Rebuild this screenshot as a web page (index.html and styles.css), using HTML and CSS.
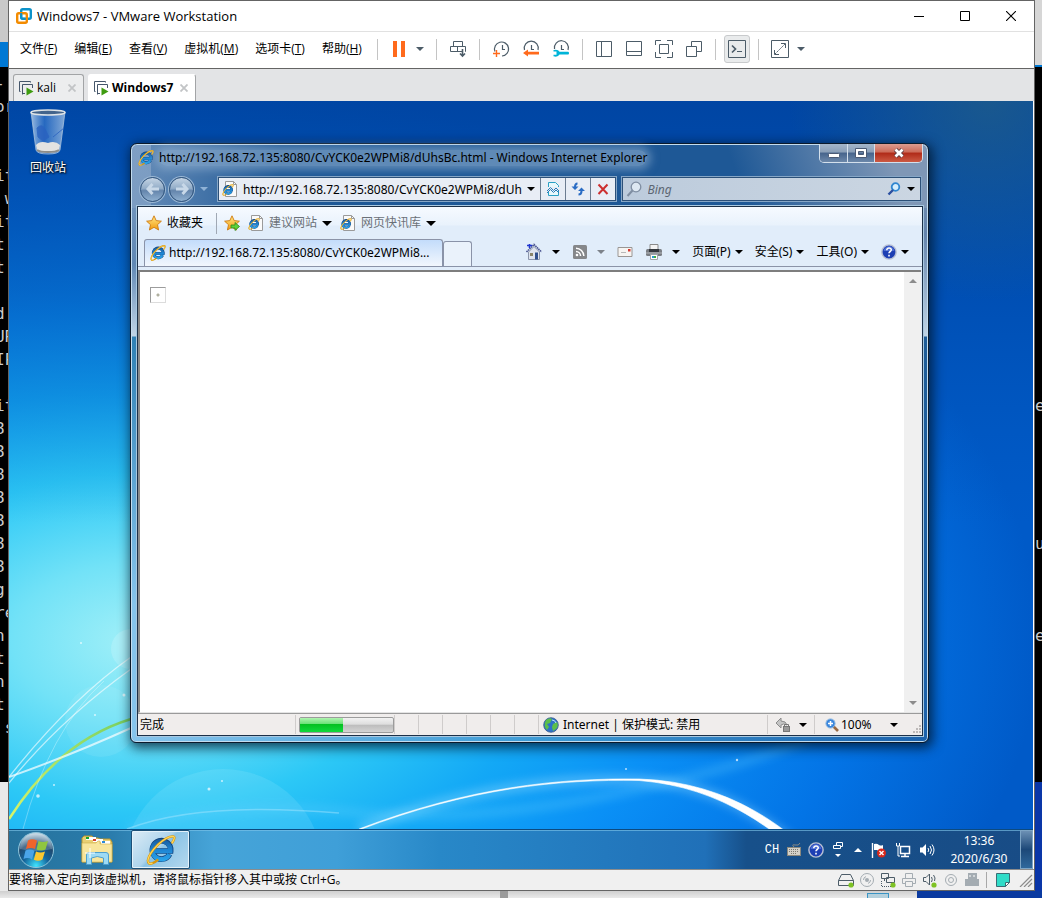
FILE: index.html
```html
<!DOCTYPE html>
<html lang="zh-cn">

<head>
    <meta charset="UTF-8">
    <meta name="viewport" content="width=device-width, initial-scale=1.0">
    <title>Windows7 - VMware Workstation</title>
    <link rel="stylesheet" href="styles.css">
</head>

<body>
    <!-- 公用图标 -->
    <svg class="defs" width="0" height="0">
        <defs>
            <linearGradient id="ieBlue" gradientUnits="userSpaceOnUse" x1="0" y1="4" x2="0" y2="29">
                <stop offset="0" stop-color="#17599c" />
                <stop offset=".5" stop-color="#1f86d4" />
                <stop offset="1" stop-color="#2aa8ee" />
            </linearGradient>
            <linearGradient id="gold" x1="0" y1="0" x2="0" y2="1">
                <stop offset="0" stop-color="#ffe98a" />
                <stop offset="1" stop-color="#f29a0c" />
            </linearGradient>
            <symbol id="ie" viewBox="0 0 32 32">
                <path d="M25.200 20.500A9.800 9.800 0 1 1 26.300 17H9" fill="none" stroke="#0f3f78" stroke-width="6" />
                <path d="M25 20.500A9.700 9.700 0 1 1 26 17H9" fill="none" stroke="url(#ieBlue)" stroke-width="4.800" />
                <path d="M27.500 9Q32 2 29 1.500Q23 1 13 10Q3 20 2 27Q2 32 7 30Q10 29 13 26" fill="none" stroke="#d8980e" stroke-width="2.600" />
                <path d="M27.500 9Q32 2 29 1.500Q23 1 13 10Q3 20 2 27Q2 32 7 30" fill="none" stroke="#ffd65a" stroke-width="1.300" />
            </symbol>
            <symbol id="page" viewBox="0 0 16 16">
                <path d="M3.500 .5H11.500L14.500 3.500V15.500H3.500Z" fill="#fafafa" stroke="#9a9a9a" />
                <path d="M11.500 .5V3.500H14.500" fill="none" stroke="#9a9a9a" />
                <use href="#ie" x="0" y="3" width="12" height="12" />
            </symbol>
            <symbol id="caret" viewBox="0 0 8 4">
                <path d="M0 0H8L4 4Z" fill="currentColor" />
            </symbol>
            <symbol id="clockface" viewBox="0 0 20 20">
                <path d="M4 12.500A7 7 0 1 1 11 17" fill="none" stroke="#4c5c68" stroke-width="1.200" />
                <path d="M11.500 6V10.500H14" fill="none" stroke="#4c5c68" stroke-width="1.200" />
            </symbol>
            <symbol id="vm" viewBox="0 0 16 16">
                <path d="M2.500 11.500H1.500V1.500H12.500V2.500M4.500 14.500V4.500H14.500V8M4 13.500H7" fill="none" stroke="#45566b" />
                <path d="M8.500 7.500L15.500 11.500L8.500 15.500Z" fill="#3f9c10" />
            </symbol>
            <symbol id="star" viewBox="0 0 16 16">
                <path d="M8 .8L10.200 5.600L15.400 6.200L11.500 9.700L12.600 15L8 12.300L3.400 15L4.500 9.700L.6 6.200L5.800 5.600Z" fill="url(#gold)" stroke="#cf7a10" stroke-width=".9" />
            </symbol>
            <symbol id="help" viewBox="0 0 18 18">
                <circle cx="9" cy="9" r="8" fill="#1d3fb4" stroke="#b8c0d4" stroke-width="1.600" />
                <path d="M3 8A6 5.500 0 0 1 15 8Z" fill="#6a8ae6" opacity=".6" />
                <path d="M6.500 7C6.500 3.500 11.800 3.800 11.500 6.800C11.300 8.500 9 8.500 9 10.500M9 12V14" fill="none" stroke="#fff" stroke-width="1.800" />
            </symbol>
            <symbol id="x" viewBox="0 0 8 8">
                <path d="M.5 .5L7.500 7.500M7.500 .5L.5 7.500" stroke="currentColor" stroke-width="1.800" />
            </symbol>
        </defs>
    </svg>

    <div class="screen">
        <!-- 后面的终端窗口 -->
        <div class="behind behind_left">
            <div class="behind_head"></div>
            <div class="behind_tab"></div>
            <pre class="terminal">-
or


it
 w
it
t
t

d
UR
IP
 :
it
8
8
8
8
8
8
8
g
re
n
t
n
t
 s</pre>
        </div>

        <main class="vmware">
            <header class="titlebar">
                <svg class="logo" viewBox="0 0 16 16">
                    <rect x="5.200" y="1.200" width="9.600" height="9.600" rx="1.500" fill="none" stroke="#0d92c9" stroke-width="2.400" />
                    <rect x="1.200" y="5.200" width="9.600" height="9.600" rx="1.500" fill="none" stroke="#f38b00" stroke-width="2.400" />
                    <path d="M5.200 5V9.500Q5.200 10.800 6.500 10.800H9.500" fill="none" stroke="#0d92c9" stroke-width="2" />
                </svg>
                <h1 class="title">Windows7 - VMware Workstation</h1>
                <div class="caption">
                    <button aria-label="最小化"><svg viewBox="0 0 10 10"><path d="M0 5.500H10" stroke="#000" /></svg></button>
                    <button aria-label="最大化"><svg viewBox="0 0 10 10"><path d="M.5 .5H9.500V9.500H.5Z" fill="none" stroke="#000" /></svg></button>
                    <button aria-label="关闭"><svg viewBox="0 0 10 10"><path d="M0 0L10 10M10 0L0 10" stroke="#000" stroke-width="1.100" /></svg></button>
                </div>
            </header>

            <div class="menubar">
                <nav class="menus">
                    <button>文件(<u>F</u>)</button>
                    <button>编辑(<u>E</u>)</button>
                    <button>查看(<u>V</u>)</button>
                    <button>虚拟机(<u>M</u>)</button>
                    <button>选项卡(<u>T</u>)</button>
                    <button>帮助(<u>H</u>)</button>
                </nav>
                <div class="tools">
                    <span class="sep"></span>
                    <button aria-label="挂起"><svg viewBox="0 0 20 20"><path d="M4 2H8V18H4ZM12 2H16V18H12Z" fill="#ff6a1c" /></svg></button>
                    <button class="drop power" aria-label="电源选项"><svg class="caret"><use href="#caret" /></svg></button>
                    <span class="sep"></span>
                    <button aria-label="发送 Ctrl+Alt+Del"><svg viewBox="0 0 20 20"><path d="M5.500 7.500V2.500H14.500V7.500M14 12.500H2.500V7.500H17.500V12.500H17M9.500 7.500V12.500" fill="none" stroke="#4c5c68" /><path d="M14.500 10V17M12 14.500L14.500 17L17 14.500" fill="none" stroke="#4c5c68" stroke-width="1.600" /></svg></button>
                    <span class="sep"></span>
                    <button aria-label="拍摄快照"><svg viewBox="0 0 20 20"><use href="#clockface" /><path d="M2 14.500H9M5.500 11V18" stroke="#ff6a1c" stroke-width="1.400" /></svg></button>
                    <button aria-label="恢复快照"><svg viewBox="0 0 20 20"><path d="M3.500 11A7 7 0 1 1 17 11M10.500 6V10.500H13" fill="none" stroke="#4c5c68" stroke-width="1.200" /><path d="M2 14L7 10.500V12.800H18V15.500H7V17.500Z" fill="#ff6a1c" /></svg></button>
                    <button aria-label="管理快照"><svg viewBox="0 0 20 20"><path d="M3.500 10A7 7 0 1 1 17 11M10.500 6V10.500H13" fill="none" stroke="#4c5c68" stroke-width="1.200" /><path d="M2.500 11Q7 9.800 8.500 12.800H17Q18 12.800 18 14.200Q18 15.500 17 15.500H8.500Q7 18.500 2.500 17.300V15.700H5.500V12.600H2.500Z" fill="#00b4d8" /></svg></button>
                    <span class="sep"></span>
                    <button aria-label="显示库"><svg viewBox="0 0 20 20"><path d="M2.500 2.500H17.500V17.500H2.500ZM7.500 2.500V17.500" fill="none" stroke="#4c5c68" /></svg></button>
                    <button aria-label="显示缩略图"><svg viewBox="0 0 20 20"><path d="M2.500 2.500H17.500V16.500H2.500ZM2.500 12.500H17.500" fill="none" stroke="#4c5c68" /></svg></button>
                    <button aria-label="全屏"><svg viewBox="0 0 20 20"><path d="M1.500 6V1.500H7M13 1.500H18.500V6M18.500 13V18.500H13M7 18.500H1.500V13M5.500 5.500H14.500V14.500H5.500Z" fill="none" stroke="#4c5c68" /></svg></button>
                    <button aria-label="Unity"><svg viewBox="0 0 20 20"><path d="M2.500 7.500H12.500V17.500H2.500ZM7.500 7.500V2.500H17.500V12.500H12.500" fill="none" stroke="#4c5c68" /></svg></button>
                    <span class="sep"></span>
                    <button class="pressed" aria-label="控制台视图"><svg viewBox="0 0 20 20"><path d="M1.500 1.500H18.500V18.500H1.500Z" fill="none" stroke="#4c5c68" /><path d="M5 6.500L8.500 10L5 13.500" fill="none" stroke="#4c5c68" stroke-width="1.700" /><path d="M10 12.500H15" stroke="#4c5c68" /></svg></button>
                    <span class="sep"></span>
                    <button aria-label="拉伸客户机"><svg viewBox="0 0 20 20"><path d="M1.500 1.500H18.500V18.500H1.500ZM11 4.500H15.500V9M4.500 11V15.500H9" fill="none" stroke="#4c5c68" /><path d="M5 15L15 5" stroke="#4c5c68" stroke-dasharray="2 1" /></svg></button>
                    <button class="drop" aria-label="拉伸选项"><svg class="caret"><use href="#caret" /></svg></button>
                </div>
            </div>

            <div class="tabs">
                <div class="tab">
                    <svg class="i16"><use href="#vm" /></svg>
                    <span>kali</span>
                    <button class="tab_close" aria-label="关闭 kali"><svg><use href="#x" /></svg></button>
                </div>
                <div class="tab active">
                    <svg class="i16"><use href="#vm" /></svg>
                    <span>Windows7</span>
                    <button class="tab_close" aria-label="关闭 Windows7"><svg><use href="#x" /></svg></button>
                </div>
            </div>

            <section class="guest">
                <svg class="wallpaper" viewBox="0 0 1024 768" preserveAspectRatio="none">
                    <defs>
                        <radialGradient id="sky" gradientUnits="userSpaceOnUse" cx="0" cy="0" r="1" gradientTransform="translate(130 540) scale(900 560)">
                            <stop offset="0" stop-color="#a2f0f8" />
                            <stop offset=".14" stop-color="#72e2f7" />
                            <stop offset=".3" stop-color="#2cc8f6" />
                            <stop offset=".45" stop-color="#13a8f6" />
                            <stop offset=".6" stop-color="#0a90f6" />
                            <stop offset=".8" stop-color="#0374e6" />
                            <stop offset="1" stop-color="#005ac8" />
                        </radialGradient>
                        <linearGradient id="night" x1="0" y1="0" x2="0" y2="1">
                            <stop offset="0" stop-color="#00409a" stop-opacity=".8" />
                            <stop offset=".25" stop-color="#0044a0" stop-opacity=".5" />
                            <stop offset=".55" stop-color="#0050b0" stop-opacity="0" />
                        </linearGradient>
                        <radialGradient id="corner" gradientUnits="userSpaceOnUse" cx="980" cy="0" r="200">
                            <stop offset="0" stop-color="#2a6480" stop-opacity=".6" />
                            <stop offset="1" stop-color="#2a6480" stop-opacity="0" />
                        </radialGradient>
                        <linearGradient id="leaf" x1="0" y1="1" x2="1" y2="0">
                            <stop offset="0" stop-color="#d8f46a" />
                            <stop offset="1" stop-color="#78cf60" />
                        </linearGradient>
                        <filter id="soft" x="-10%" y="-30%" width="120%" height="160%"><feGaussianBlur stdDeviation="5" /></filter>
                        <filter id="edge" x="-10%" y="-10%" width="120%" height="120%"><feGaussianBlur stdDeviation=".7" /></filter>
                    </defs>
                    <rect width="1024" height="768" fill="url(#sky)" />
                    <rect width="1024" height="768" fill="url(#night)" />
                    <rect width="1024" height="768" fill="url(#corner)" />
                    <circle cx="214" cy="768" r="100" fill="#c8f6ff" opacity=".13" />
                    <circle cx="92" cy="620" r="36" fill="#fff" opacity=".08" />
                    <circle cx="122" cy="548" r="20" fill="#fff" opacity=".16" />
                    <path d="M118 728Q200 700 330 710Q460 725 620 690Q740 665 800 636" fill="none" stroke="#6ad4ff" stroke-width="8" opacity=".3" filter="url(#soft)" />
                    <path d="M118 728Q190 700 330 712" fill="none" stroke="#b8ecff" stroke-width="1.500" opacity=".4" />
                    <path d="M350 728C460 686 560 676 630 679C720 684 770 728 814 768" fill="none" stroke="#9fe0ff" stroke-width="10" opacity=".4" filter="url(#soft)" />
                    <path d="M350 728C460 686 550 677 630 678C725 681 780 730 820 768H807C770 732 715 686 630 679.500C550 678 460 687 350 729Z" fill="#fff" stroke="#fff" stroke-width=".6" filter="url(#edge)" />
                    <path d="M0 718Q50 640 122 618" fill="none" stroke="url(#leaf)" stroke-width="2.500" />
                    <path d="M0 676Q60 655 122 627" fill="none" stroke="#fff" stroke-width="2" opacity=".7" />
                    <path d="M0 682Q50 620 122 568M0 676Q60 600 122 556" fill="none" stroke="#fff" stroke-width="1.300" opacity=".6" />
                    <path d="M14 728Q40 630 95 580" fill="none" stroke="#fff" opacity=".3" />
                    <g fill="#fff" opacity=".7">
                        <circle cx="115" cy="594" r="1.500" /><circle cx="86" cy="614" r="1" /><circle cx="29" cy="695" r="1.800" />
                        <circle cx="45" cy="684" r="1" /><circle cx="200" cy="688" r="1.500" /><circle cx="213" cy="680" r="1" />
                        <circle cx="617" cy="668" r="1" /><circle cx="728" cy="659" r="1.200" /><circle cx="72" cy="542" r="1" />
                    </g>
                </svg>

                <div class="desktop">
                    <a class="shortcut" href="#recycle">
                        <svg viewBox="0 0 40 46">
                            <defs>
                                <linearGradient id="bin" x1="0" y1="0" x2="1" y2="0">
                                    <stop offset="0" stop-color="#cfe2f4" stop-opacity=".75" />
                                    <stop offset=".4" stop-color="#3f7ed0" stop-opacity=".6" />
                                    <stop offset="1" stop-color="#d8e8f6" stop-opacity=".6" />
                                </linearGradient>
                            </defs>
                            <path d="M3 3L8 41Q9 45 20 45Q31 45 32 41L37 3Z" fill="url(#bin)" stroke="#a9c3dd" stroke-width=".8" />
                            <path d="M8 36Q12 31 20 34Q27 31 32 36L31 41Q30 44 20 44Q10 44 9 41Z" fill="#e3e3e1" />
                            <path d="M9 19Q14 14 17 20L21 28L15 32L10 28ZM25 28L36 19" fill="#2a62c0" stroke="#2a62c0" opacity=".8" />
                            <ellipse cx="20" cy="3.500" rx="17" ry="2.500" fill="#43648c" stroke="#dfe3e6" stroke-width="1.600" />
                            <path d="M9 41Q12 43 20 43Q28 43 31 41" fill="none" stroke="#8d8d8a" stroke-width="2" />
                        </svg>
                        <span>回收站</span>
                    </a>

                    <article class="ie">
                        <header class="ie_title">
                            <svg class="i16"><use href="#ie" /></svg>
                            <h2>http://192.168.72.135:8080/CvYCK0e2WPMi8/dUhsBc.html - Windows Internet Explorer</h2>
                            <div class="ie_caption">
                                <button class="min" aria-label="最小化"><svg viewBox="0 0 14 12"><rect x="1.500" y="6.500" width="11" height="4" rx="1" fill="#fff" stroke="#4a5a74" /></svg></button>
                                <button class="max" aria-label="最大化"><svg viewBox="0 0 14 12"><path d="M1.500 1.500H12.500V10.500H1.500ZM4.500 4.500V7.500H9.500V4.500Z" fill="#fff" stroke="#4a5a74" fill-rule="evenodd" /></svg></button>
                                <button class="close" aria-label="关闭"><svg viewBox="0 0 14 12"><path d="M3.500 2.500L10.500 9.500M10.500 2.500L3.500 9.500" stroke="#5a3a40" stroke-width="4.500" /><path d="M3.500 2.500L10.500 9.500M10.500 2.500L3.500 9.500" stroke="#fff" stroke-width="2.800" /></svg></button>
                            </div>
                        </header>

                        <div class="ie_nav">
                            <div class="history">
                                <button class="round" aria-label="后退"><svg viewBox="0 0 16 16"><path d="M7.500 3L3 8L7.500 13M3.500 8H14" fill="none" stroke="#c8d8e8" stroke-width="3" /></svg></button>
                                <button class="round" aria-label="前进"><svg viewBox="0 0 16 16"><path d="M8.500 3L13 8L8.500 13M12.500 8H2" fill="none" stroke="#c8d8e8" stroke-width="3" /></svg></button>
                                <button class="recent" aria-label="最近浏览的网页"><svg class="caret"><use href="#caret" /></svg></button>
                            </div>
                            <div class="field address">
                                <svg class="i16"><use href="#page" /></svg>
                                <input type="text" aria-label="地址" value="http://192.168.72.135:8080/CvYCK0e2WPMi8/dUhsBc.html">
                                <button class="field_drop" aria-label="显示地址列表"><svg class="caret"><use href="#caret" /></svg></button>
                                <button class="field_btn" aria-label="兼容性视图"><svg viewBox="0 0 16 16"><path d="M3.500 6V1.500H10.500L13.500 4.500V6M3.500 10V14.500H13.500V10" fill="#e8f8fc" stroke="#2aa0c4" /><path d="M2 10L5.500 6.500L8.500 9.500L11 7L14 10M2 12L5.500 8.500L8.500 11.500L11 9L14 12" fill="none" stroke="#2a7cb8" /></svg></button>
                                <button class="field_btn" aria-label="刷新"><svg viewBox="0 0 16 16"><path d="M7.500 2.500Q5 2.500 5 6M8.500 13.500Q11.500 13.500 11.500 10" fill="none" stroke="#2a6cc4" stroke-width="2" /><path d="M1.500 5.500H8.500L5 9ZM8 10H15L11.500 6.500Z" fill="#2a6cc4" /></svg></button>
                                <button class="field_btn" aria-label="停止"><svg viewBox="0 0 16 16"><path d="M3.500 3.500L12.500 13M12.500 3.500L3.500 13" stroke="#cc2f2f" stroke-width="2" /></svg></button>
                            </div>
                            <div class="field search">
                                <svg class="i16" viewBox="0 0 16 16"><circle cx="10" cy="6" r="4.800" fill="#dde8f2" stroke="#7f8ea2" stroke-width="1.300" /><path d="M6.500 9.500L1.500 15" stroke="#7f8ea2" stroke-width="2" /></svg>
                                <input type="text" aria-label="搜索" placeholder="Bing">
                                <button class="field_go" aria-label="搜索"><svg viewBox="0 0 16 16"><circle cx="9.500" cy="6" r="3.800" fill="#d6eefc" stroke="#2f86d0" stroke-width="1.800" /><path d="M7 9L2.500 13.500" stroke="#2a4fa0" stroke-width="2.400" /></svg></button>
                                <button class="field_drop" aria-label="搜索选项"><svg class="caret"><use href="#caret" /></svg></button>
                            </div>
                        </div>

                        <div class="ie_client">
                            <div class="favorites">
                                <button><svg class="i16"><use href="#star" /></svg>收藏夹</button>
                                <span class="fav_sep"></span>
                                <button aria-label="添加到收藏夹栏"><svg class="i16" viewBox="0 0 16 16"><use href="#star" /><path d="M7 10H11V7.500L15.500 11.500L11 15.500V13H7Z" fill="#5fd03a" stroke="#2d8a1a" stroke-width=".8" /></svg></button>
                                <button class="gray"><svg class="i16"><use href="#page" /></svg>建议网站<svg class="caret big"><use href="#caret" /></svg></button>
                                <button class="gray"><svg class="i16"><use href="#page" /></svg>网页快讯库<svg class="caret big"><use href="#caret" /></svg></button>
                            </div>
                            <div class="ie_tabs">
                                <button class="ie_tab"><svg class="i16"><use href="#ie" /></svg><span>http://192.168.72.135:8080/CvYCK0e2WPMi8...</span></button>
                                <button class="ie_newtab" aria-label="新选项卡"></button>
                                <div class="commands">
                                    <button class="wide" aria-label="主页"><svg class="i18" viewBox="0 0 18 18"><path d="M3.500 9V16.500H14.500V9L9 3.500Z" fill="#dfe4ee" stroke="#8d97ac" /><path d="M1.500 9L9 1.500L16.500 9" fill="none" stroke="#4a5490" stroke-width="1.600" stroke-dasharray="1.500 .6" /><path d="M4.500 1V5M2 2.500H7" stroke="#1f36d0" stroke-width="1.600" /><rect x="5" y="10" width="3" height="3" fill="#8a8468" /><rect x="10" y="9.500" width="3" height="7" fill="#31508c" /></svg><svg class="caret"><use href="#caret" /></svg></button>
                                    <button class="wide dim" aria-label="源"><svg class="i16" viewBox="0 0 16 16"><rect x="1" y="1" width="14" height="14" rx="1.500" fill="#85878a" /><path d="M4 7.500A4.500 4.500 0 0 1 8.500 12M4 4.200A8 8 0 0 1 11.800 12" fill="none" stroke="#fff" stroke-width="1.500" /><circle cx="5" cy="11" r="1.300" fill="#fff" /></svg><svg class="caret"><use href="#caret" /></svg></button>
                                    <button aria-label="阅读邮件"><svg class="i16" viewBox="0 0 16 16"><path d="M1 3.500H15V12.500H1Z" fill="#f6f4f2" stroke="#9a9694" /><rect x="11" y="5" width="2.500" height="2.500" fill="#d83a30" /><path d="M4 8.500H9" stroke="#b8b8b8" /></svg></button>
                                    <button class="wide" aria-label="打印"><svg class="i18" viewBox="0 0 18 18"><path d="M5 6V1.500H13V6" fill="#f4f4f4" stroke="#8a8a8a" /><rect x="1" y="6" width="16" height="7" rx="1.500" fill="#7a7e84" /><path d="M4 6H14V9H4Z" fill="#34383e" /><path d="M1 10H17" stroke="#b4b8bc" /><path d="M5.500 11.500H12.500V16.500H5.500Z" fill="#fff" stroke="#a0a4a8" /><rect x="7" y="13" width="2" height="2" fill="#2a9ad0" /><rect x="9" y="13" width="2" height="2" fill="#3fae40" /></svg><svg class="caret"><use href="#caret" /></svg></button>
                                    <button>页面(P)<svg class="caret"><use href="#caret" /></svg></button>
                                    <button>安全(S)<svg class="caret"><use href="#caret" /></svg></button>
                                    <button>工具(O)<svg class="caret"><use href="#caret" /></svg></button>
                                    <button aria-label="帮助"><svg class="i16"><use href="#help" /></svg><svg class="caret"><use href="#caret" /></svg></button>
                                </div>
                            </div>
                            <div class="page">
                                <div class="page_body">
                                    <div class="broken"></div>
                                </div>
                                <div class="scrollbar">
                                    <svg class="caret up"><use href="#caret" /></svg>
                                    <svg class="caret"><use href="#caret" /></svg>
                                </div>
                            </div>
                            <footer class="ie_status">
                                <span class="done">完成</span>
                                <div class="loading"><div class="bar"><div class="fill"></div></div></div>
                                <i></i><i></i><i></i><i></i><i></i><i></i>
                                <span class="zone">
                                    <svg class="i16" viewBox="0 0 16 16"><circle cx="8" cy="8" r="7.300" fill="#2d72c8" stroke="#37588c" stroke-width=".8" /><path d="M3 3Q7 0 9 2L7 6L4 7L6 10L4 13Q0 9 3 3ZM10 7L14 5Q16 9 13 12L10 14L9 10Z" fill="#5cc04a" /><path d="M9 3Q12 3 13 6" stroke="#bfe4ff" fill="none" /></svg>
                                    Internet | 保护模式: 禁用
                                </span>
                                <button class="privacy" aria-label="隐私"><svg class="i16" viewBox="0 0 16 16"><path d="M1 6L6 1V4Q11 4 12 8Q8 6 6 8V11Z" fill="#c4c4c4" stroke="#8c8c8c" /><rect x="8.500" y="9.500" width="6" height="5" fill="#999" stroke="#777" /><path d="M9.500 9.500V7.500H13.500V9.500" fill="none" stroke="#777" /></svg><svg class="caret"><use href="#caret" /></svg></button>
                                <button class="zoom"><svg class="i14" viewBox="0 0 14 14"><path d="M8.500 8.500L13 13" stroke="#9a6a42" stroke-width="2.600" /><circle cx="5.500" cy="5.500" r="4.600" fill="#3a86dc" stroke="#8fb8e0" /><path d="M3 5.500H8M5.500 3V8" stroke="#fff" stroke-width="1.500" /></svg><span>100%</span><svg class="caret"><use href="#caret" /></svg></button>
                                <svg class="grip" viewBox="0 0 8 8"><path d="M6 0h2v2h-2zM6 3h2v2h-2zM3 3h2v2h-2zM6 6h2v2h-2zM3 6h2v2h-2zM0 6h2v2h-2z" fill="#bdb9b8" /></svg>
                            </footer>
                        </div>
                    </article>
                </div>

                <div class="taskbar">
                    <button class="start" aria-label="开始">
                        <svg viewBox="0 0 38 38">
                            <defs>
                                <radialGradient id="orb" cx=".5" cy=".95" r=".9">
                                    <stop offset="0" stop-color="#3fe4ff" />
                                    <stop offset=".4" stop-color="#14659c" />
                                    <stop offset=".7" stop-color="#1f4a70" />
                                    <stop offset="1" stop-color="#b4ccdc" />
                                </radialGradient>
                            </defs>
                            <circle cx="19" cy="19" r="17.500" fill="url(#orb)" stroke="#8ec4da" />
                            <path d="M3 18A16 16 0 0 1 35 18Q19 22 3 18Z" fill="#fff" opacity=".2" />
                            <path d="M11 9.500Q15 7 20 9.500L18 18Q14 16 9 18Z" fill="#f0642c" />
                            <path d="M21.500 10Q26 12 31 10L28.500 18.500Q24 20.500 19.500 18.500Z" fill="#8fc640" />
                            <path d="M8.500 19.500Q13 17.500 17.500 19.800L15 28.500Q11 26 6.500 28Z" fill="#4aa4e8" />
                            <path d="M19 20.500Q23.500 22.500 28 20.500L25.500 28.500Q21.500 31 16.800 28.800Z" fill="#fcc830" />
                        </svg>
                    </button>
                    <button class="explorer" aria-label="Windows 资源管理器">
                        <svg viewBox="0 0 34 32">
                            <path d="M2 4L4 2H12L14 4H18L20 5H30L32 8V28H2Z" fill="#e9cf74" stroke="#b8952f" />
                            <path d="M6 3H16V6H6ZM13 5H23V8H13ZM21 7H30V10H21Z" fill="#fff" />
                            <path d="M6 3H9V5H6Z" fill="#15a32a" /><path d="M13 5H16V7H13Z" fill="#d8402c" /><path d="M22 7H25V9H22Z" fill="#2a8ad8" />
                            <path d="M2 9H16L18 7H20V10H32V28H2Z" fill="#f8e59c" stroke="#cfae4a" stroke-width=".6" />
                            <path d="M6.500 30.500V21Q6.500 18.500 9 18.500H26Q28.500 18.500 28.500 21V30.500H23.500V24Q17 21 11.500 24V30.500Z" fill="#9ddaf4" stroke="#4d9fce" />
                            <path d="M10 14V24M5 19H15" stroke="#fff" />
                        </svg>
                    </button>
                    <button class="running" aria-label="Internet Explorer"><svg><use href="#ie" /></svg></button>
                    <div class="tray">
                        <span class="slot lang">CH</span>
                        <span class="slot"><svg viewBox="0 0 16 16"><path d="M8 5Q5 2 9 3Q13 4 14 1" fill="none" stroke="#8a8a84" /><rect x="1.500" y="5.500" width="13" height="8" fill="#d4d1c8" stroke="#8a887e" /><path d="M3 7.500H13M3 9.500H13M5 11.500H11" stroke="#7c7a72" stroke-dasharray="1 1" /></svg></span>
                        <span class="slot"><svg><use href="#help" /></svg></span>
                        <span class="slot"><svg class="lang_opts" viewBox="0 0 12 20"><path d="M4.500 5.500V2.500H10.500V6.500H8.500M1.500 5.500H8.500V8.500H1.500Z" fill="none" stroke="#fff" /><path d="M3 14H9L6 17Z" fill="#fff" /></svg></span>
                        <span class="slot expand"><svg viewBox="0 0 16 16"><path d="M4 10H12L8 6Z" fill="#fff" /></svg></span>
                        <span class="slot sys"><svg viewBox="0 0 16 16"><path d="M1.500 1V16" stroke="#fff" stroke-width="1.400" /><path d="M3 2Q6 1 8 3Q10 4 12 3V8Q8 10 6 8H3Z" fill="#fff" /><circle cx="10.500" cy="11" r="4.500" fill="#d8281c" /><path d="M8.500 9L12.500 13M12.500 9L8.500 13" stroke="#fff" stroke-width="1.400" /></svg></span>
                        <span class="slot sys"><svg viewBox="0 0 16 16"><path d="M5.500 4.500H14.500V11.500H5.500ZM10 12V14M6 14.500H14" fill="none" stroke="#fff" stroke-width="1.500" /><path d="M1.500 1V4H4.500V1M3 4V14H5" fill="none" stroke="#fff" /></svg></span>
                        <span class="slot sys"><svg viewBox="0 0 16 16"><path d="M1 5.500H3.500L7 2V14L3.500 10.500H1Z" fill="#fff" /><path d="M9 6Q10.500 8 9 10M11 4Q14 8 11 12M13 2.500Q17 8 13 13.500" fill="none" stroke="#fff" /></svg></span>
                        <time class="clock">13:36<br>2020/6/30</time>
                        <button class="peek" aria-label="显示桌面"></button>
                    </div>
                </div>
            </section>

            <footer class="statusbar">
                <p>要将输入定向到该虚拟机，请将鼠标指针移入其中或按 Ctrl+G。</p>
                <div class="devices">
                    <svg viewBox="0 0 16 16"><path d="M.5 13.500V8.500L3.500 2.500H12.500L15.500 8.500V13.500ZM.5 8.500H15.500" fill="none" stroke="#4c5c68" /><circle cx="13" cy="13" r="2.600" fill="#7ec225" /></svg>
                    <svg viewBox="0 0 16 16"><circle cx="8" cy="8" r="6.500" fill="none" stroke="#a4acb2" /><circle cx="8" cy="8" r="2" fill="#a4acb2" /><path d="M4.500 8A3.500 3.500 0 0 1 7 4.600M11.500 8A3.500 3.500 0 0 1 9 11.400" fill="none" stroke="#a4acb2" /></svg>
                    <svg viewBox="0 0 16 16"><path d="M1.500 1.500H8.500V6.500H1.500ZM6.500 5.500H14.500V10.500H6.500ZM4.500 6.500V9" fill="#f0f0f0" stroke="#4c5c68" /><path d="M1.500 9V14.500H12" fill="none" stroke="#4c5c68" stroke-dasharray="1 1" /><circle cx="13" cy="13" r="2.600" fill="#7ec225" /></svg>
                    <svg viewBox="0 0 16 16"><path d="M4.500 6.500V1.500H11.500V6.500M4 11.500H1.500V6.500H14.500V11.500H12M4.500 9.500H11.500V14.500H4.500Z" fill="none" stroke="#a4acb2" /></svg>
                    <svg viewBox="0 0 16 16"><path d="M1.500 5.500H4L7.500 2V13L4 9.500H1.500Z" fill="none" stroke="#4c5c68" /><path d="M9.500 5Q11 7.500 9.500 10M11.500 3Q14 6 12.500 9" fill="none" stroke="#4c5c68" /><circle cx="12" cy="13" r="2.600" fill="#7ec225" /></svg>
                    <svg viewBox="0 0 16 16"><circle cx="8" cy="8" r="5.500" fill="none" stroke="#a4acb2" /><circle cx="8" cy="8" r="2.500" fill="none" stroke="#a4acb2" /></svg>
                    <svg viewBox="0 0 16 16"><path d="M4 1H13V7H15V14H1V7H4Z" fill="#a4acb2" /><path d="M6 3V5M10 3V5" stroke="#fff" /></svg>
                    <span class="dev_sep"></span>
                    <svg class="note" viewBox="0 0 16 16"><path d="M1.500 1.500H14.500V10.500L10.500 14.500H1.500Z" fill="#30dcc8" stroke="#3c6c74" /><path d="M14.500 10.500H10.500V14.500Z" fill="#fff" stroke="#3c6c74" /></svg>
                    <svg class="resize" viewBox="0 0 14 14"><path d="M1 14L13 2M5 14L13 6M9 14L13 10" stroke="#8c8c8c" stroke-width="1.200" /></svg>
                </div>
            </footer>
        </main>

        <div class="behind behind_right">
            <div class="behind_head"></div>
            <pre class="terminal">














e





u



e</pre>
        </div>
        <div class="behind_bottom">
            <div class="paper"><span class="rail"></span><span class="chip"></span></div>
        </div>
    </div>
</body>

</html>
```
FILE: styles.css
```css
* {
    box-sizing: border-box;
}

body {
    margin: 0;
    font-family: "Open Sans", "Noto Sans CJK SC", sans-serif;
    font-size: 12px;
    line-height: 16px;
    color: #000;
    overflow: hidden;
}

button {
    display: flex;
    align-items: center;
    justify-content: center;
    margin: 0;
    padding: 0;
    border: 0;
    background: none;
    font: inherit;
    color: inherit;
    white-space: nowrap;
}

svg {
    display: block;
    flex: none;
}

h1, h2, p, pre {
    margin: 0;
    font-size: 12px;
    font-weight: normal;
}

.defs {
    position: absolute;
}

.i14 {
    width: 14px;
    height: 14px;
}

.i16 {
    width: 16px;
    height: 16px;
}

.i18 {
    width: 18px;
    height: 18px;
}

.caret {
    width: 8px;
    height: 4px;
}

.caret.big {
    width: 10px;
    height: 5px;
    color: #000;
}

/* 整个屏幕: 左右和底部露出后面的窗口 */
.screen {
    display: grid;
    grid-template-columns: 8px 1fr 7px;
    grid-template-rows: 1fr 7px;
    height: 100vh;
    background: #0a3aa0;
}

.behind {
    display: flex;
    flex-direction: column;
    overflow: hidden;
    min-height: 0;
}

.behind_left {
    background: #e9e9e9;
}

.behind_right {
    background: #0a36a8;
}

.behind_left .behind_head {
    height: 42px;
    background: #c9c9c9;
}

.behind_left .behind_tab {
    height: 25px;
    background: #0078d4;
}

.behind_right .behind_head {
    height: 67px;
    background: #d6d6d6;
    border-bottom: 2px solid #0078d4;
}

.terminal {
    height: 715px;
    padding-top: 5px;
    overflow: hidden;
    background: #000;
    color: #ccc;
    font-family: "DejaVu Sans Mono", monospace;
    font-size: 16px;
    line-height: 23px;
}

.behind_left .terminal {
    margin-left: -5px;
}

.behind_bottom {
    grid-column: 1 / -1;
    background: #0a3aa0;
}

.paper {
    display: flex;
    justify-content: space-between;
    width: 88%;
    height: 100%;
    padding: 0 28px 0 500px;
    background: linear-gradient(#cfcfcf, #e9e9e9);
}

.rail {
    width: 8px;
    background: #9a9a9a;
}

.chip {
    width: 22px;
    margin-top: 2px;
    border: 1px solid #3a94c4;
    border-bottom: 0;
    background: #b4d0dc;
}

/* VMware 主窗口 */
.vmware {
    display: flex;
    flex-direction: column;
    min-width: 0;
    min-height: 0;
    border: 1px solid #646464;
    background: #fff;
}

.titlebar {
    display: flex;
    align-items: center;
    height: 31px;
    padding: 0 0 1px 7px;
    border-bottom: 1px solid #e1e1e1;
}

.titlebar .logo {
    width: 16px;
    height: 16px;
    margin-right: 5px;
}

.titlebar .title {
    flex: 1;
    font-size: 13px;
}

.caption {
    display: flex;
}

.caption button {
    width: 46px;
    height: 29px;
}

.caption svg {
    width: 10px;
    height: 10px;
}

.menubar {
    display: flex;
    align-items: center;
    height: 37px;
    padding-bottom: 2px;
    border-bottom: 1px solid #646464;
}

.menus {
    display: flex;
    flex: none;
    gap: 17px;
    width: 362px;
    padding-left: 11px;
}

.tools {
    display: flex;
    align-items: center;
}

.tools button {
    width: 30px;
    height: 28px;
    color: #4c5c68;
}

.tools button > svg {
    width: 20px;
    height: 20px;
}

.tools .drop {
    width: 12px;
}

.tools .power {
    margin-right: 4px;
}

.tools .drop .caret {
    width: 8px;
    height: 4px;
}

.tools .pressed {
    width: 26px;
    margin: 0 2px;
    border: 1px solid #c8cacc;
    border-radius: 3px;
    background: #e9ebec;
}

.sep {
    width: 1px;
    height: 21px;
    margin: 0 6px;
    background: #c4c4c4;
}

.tabs {
    display: flex;
    align-items: flex-end;
    gap: 4px;
    height: 32px;
    padding-left: 4px;
    background: #e3e4e6;
}

.tab {
    display: flex;
    align-items: center;
    gap: 3px;
    width: 71px;
    height: 27px;
    padding: 0 7px 0 4px;
    border: 1px solid #a2a4a6;
    border-bottom: 0;
    border-radius: 3px 3px 0 0;
    background: #ecedee;
}

.tab.active {
    width: 108px;
    background: #fff;
    border-color: #fff #a2a4a6 #fff #fff;
    font-weight: bold;
}

.tab_close {
    margin-left: auto;
    color: #c2c4c6;
}

.tab_close svg {
    width: 8px;
    height: 8px;
}

/* 虚拟机画面 */
.guest {
    position: relative;
    display: flex;
    flex: 1;
    flex-direction: column;
    min-height: 0;
    margin-right: 1px;
    overflow: hidden;
    background: #0a84e8;
    font-family: "Noto Sans", "Noto Sans CJK SC", sans-serif;
}

.wallpaper {
    position: absolute;
    inset: 0;
    width: 100%;
    height: 100%;
}

.desktop {
    position: relative;
    flex: 1;
}

.shortcut {
    display: flex;
    flex-direction: column;
    align-items: center;
    gap: 5px;
    width: 78px;
    padding-top: 8px;
    color: #fff;
    text-decoration: none;
    text-shadow: 1px 1px 2px #000, 0 0 2px #000;
}

.shortcut svg {
    width: 40px;
    height: 46px;
}

/* IE 窗口 */
.ie {
    position: absolute;
    top: 42px;
    right: 104px;
    bottom: 86px;
    left: 121px;
    display: flex;
    flex-direction: column;
    padding: 0 5px 6px;
    border: 1px solid #0b1a2c;
    border-radius: 7px 7px 6px 6px;
    background:
        linear-gradient(90deg, #7f9fc4c0 0, #7f9fc400 150px) 0 0 / 100% 64px no-repeat,
        linear-gradient(250deg, #7f97b6 40px, #7f97b600 190px) 0 0 / 100% 64px no-repeat,
        linear-gradient(90deg, #86c4ec 0, #3f9cd6 50%, #1c62ac 100%) 0 100% / 100% 6px no-repeat,
        linear-gradient(#7f97b6 0, #6484ac 90px, #c0d4e6 192px, #1d5c98 193px, #1c62ac 100%) 100% 0 / 20px 100% no-repeat,
        linear-gradient(#7f9fc4 0, #6088b4 120px, #c0d4e6 192px, #2f80b4 193px, #86c4ec 460px) 0 0 / 20px 100% no-repeat,
        #1e5896;
    box-shadow: inset 0 0 0 1px #c4dcee, 2px 3px 12px 2px #001428c0;
}

.ie_title {
    display: flex;
    align-items: flex-start;
    height: 31px;
    padding: 6px 0 0 2px;
}

.ie_title h2 {
    margin-left: 5px;
    border-radius: 8px;
    background: #a0bcd880;
    box-shadow: 0 0 8px 4px #a0bcd880;
    white-space: nowrap;
}

.ie_caption {
    display: flex;
    align-self: flex-start;
    height: 19px;
    margin: -6px 0 0 auto;
    border: 1px solid #d4e0ec;
    border-top: 0;
    border-radius: 0 0 5px 5px;
    overflow: hidden;
}

.ie_caption button {
    width: 28px;
    border-right: 1px solid #d4e0ec;
    background: linear-gradient(#a4b6ca 0, #8a9fb8 45%, #46648c 50%, #6c88aa 100%);
}

.ie_caption .max {
    width: 27px;
}

.ie_caption .close {
    width: 47px;
    border-right: 0;
    background: linear-gradient(#dc9c90 0, #cc6a58 45%, #b02a18 50%, #cc5a44 100%);
}

.ie_caption svg {
    width: 14px;
    height: 12px;
}

.ie_nav {
    display: flex;
    align-items: center;
    gap: 6px;
    height: 31px;
    padding: 0 2px 3px 4px;
}

.history {
    display: flex;
    align-items: center;
    gap: 4px;
    width: 72px;
}

.round {
    width: 25px;
    height: 25px;
    border: 1px solid #33557c;
    border-radius: 50%;
    background: linear-gradient(#c4d4e4 0, #93adc8 45%, #6485ac 55%, #8fb0d0 100%);
    box-shadow: 0 0 0 1px #9cb8d4;
}

.round svg {
    width: 16px;
    height: 16px;
}

.recent {
    width: 12px;
    color: #8fb2d6;
}

.field {
    display: flex;
    align-items: center;
    height: 24px;
    border: 1px solid #2c5078;
    outline: 1px solid #86a6c6;
    background: #e8edf5;
}

.address {
    flex: 4;
    padding-left: 3px;
}

.search {
    flex: 3;
    padding-left: 3px;
    background: linear-gradient(90deg, #bccbdc, #cbd6e2);
}

.field input {
    flex: 1;
    min-width: 0;
    height: 20px;
    padding: 0;
    border: 0;
    outline: 0;
    background: none;
    font: inherit;
}

.address input {
    margin-left: 5px;
}

.search input {
    margin-left: 6px;
}

.search input::placeholder {
    color: #5c6672;
    font-style: italic;
}

.field_drop {
    width: 18px;
    height: 100%;
}

.field_btn {
    width: 25px;
    height: 100%;
    border-left: 1px solid #6c7c90;
}

.field_btn svg, .field_go svg {
    width: 16px;
    height: 16px;
}

.ie_client {
    display: flex;
    flex: 1;
    flex-direction: column;
    min-height: 0;
    margin-left: 1px;
    border: 1px solid #1c3048;
    outline: 1px solid #a8c8e0;
    background: linear-gradient(#f6faff 0, #e9f2fc 18px, #e1edfa 19px, #e1edfa 60px);
}

.favorites {
    display: flex;
    align-items: center;
    height: 32px;
    padding-left: 8px;
}

.favorites button {
    gap: 5px;
}

.fav_sep {
    width: 1px;
    height: 21px;
    margin: 0 7px 0 13px;
    background: #a0a8b4;
}

.favorites .gray {
    margin-left: 8px;
    color: #6b7178;
}

.ie_tabs {
    display: flex;
    align-items: flex-end;
    height: 28px;
    padding-left: 6px;
    border-bottom: 1px solid #8a93a8;
}

.ie_tab {
    justify-content: flex-start;
    gap: 3px;
    width: 299px;
    height: 27px;
    padding-left: 5px;
    border: 1px solid #8a93a8;
    border-bottom: 0;
    border-radius: 3px 3px 0 0;
    background: linear-gradient(#c3dcfb, #f2f7fd);
}

.ie_newtab {
    width: 29px;
    height: 25px;
    border: 1px solid #8a93a8;
    border-radius: 3px 3px 0 0;
    border-bottom: 0;
    background: #eaf2fb;
}

.commands {
    display: flex;
    flex: 1;
    align-items: center;
    justify-content: flex-end;
    gap: 12px;
    height: 29px;
    padding-right: 13px;
}

.commands button {
    gap: 4px;
}

.commands .wide {
    gap: 9px;
}

.commands .dim .caret {
    color: #7c828a;
}

.page {
    display: flex;
    flex: 1;
    min-height: 0;
    margin: 3px 1px 0 0;
    border-top: 2px solid #7e7e7e;
    border-left: 2px solid #8a8a8a;
    border-bottom: 1px solid #e4e4e4;
    background: #fff;
}

.page_body {
    flex: 1;
    padding: 15px 10px;
}

.broken {
    width: 16px;
    height: 16px;
    border: 1px solid;
    border-color: #9c9c9c #dcdcdc #dcdcdc #9c9c9c;
    background: radial-gradient(circle at 7px 7px, #b0b0a0 1px, #fff 2px);
}

.scrollbar {
    display: flex;
    flex-direction: column;
    align-items: center;
    justify-content: space-between;
    width: 17px;
    padding: 7px 0;
    background: #f0f0f0;
    color: #8c8c8c;
}

.up {
    transform: rotate(180deg);
}

.ie_status {
    display: flex;
    align-items: center;
    height: 22px;
    border-top: 1px solid #9a9a9a;
    background: #f0edec;
}

.done {
    width: 157px;
    padding-left: 2px;
}

.loading {
    display: flex;
    align-items: center;
    height: 19px;
    padding: 0 0 0 3px;
    border-left: 1px solid #cfcccb;
}

.bar {
    width: 95px;
    height: 16px;
    border: 1px solid #9c9c9c;
    border-radius: 2px;
    background: linear-gradient(#f2f2f2 0, #dedede 45%, #bcbcbc 50%, #d4d4d4 100%);
}

.fill {
    width: 46%;
    height: 100%;
    background: linear-gradient(#b0f4b0 0, #6ee27a 40%, #04c020 45%, #10d83c 100%);
}

.ie_status i {
    width: 24px;
    height: 19px;
    border-left: 1px solid #cfcccb;
}

.zone {
    display: flex;
    flex: 1;
    align-items: center;
    gap: 4px;
    height: 19px;
    padding-left: 4px;
    border-left: 1px solid #cfcccb;
    white-space: nowrap;
}

.privacy {
    gap: 8px;
    width: 47px;
    height: 19px;
    border-left: 1px solid #cfcccb;
}

.zoom {
    justify-content: flex-start;
    gap: 2px;
    width: 99px;
    height: 19px;
    padding-left: 10px;
    border-left: 1px solid #cfcccb;
}

.zoom .caret {
    margin-left: 16px;
}

.grip {
    align-self: flex-end;
    width: 8px;
    height: 8px;
    margin: 0 1px 2px 0;
}

/* 任务栏 */
.taskbar {
    position: relative;
    display: flex;
    align-items: center;
    height: 40px;
    border-top: 1px solid #0c4a80;
    background: linear-gradient(90deg, #26729c 0, #2a7cac 10%, #46a4d8 20%, #3f9fd8 32%, #2888c8 42%, #2070b8 68%, #17508a 72%, #184c86 100%);
    box-shadow: inset 0 1px 0 #7ec4e8a0;
    color: #fff;
}

.start {
    width: 54px;
}

.start svg {
    width: 38px;
    height: 38px;
}

.explorer {
    width: 68px;
}

.explorer svg {
    width: 34px;
    height: 32px;
}

.running {
    width: 59px;
    height: 39px;
    border: 1px solid #1c5078;
    border-radius: 2px;
    background: linear-gradient(135deg, #dcecf6 0, #aed4ec 45%, #8cc4e6 50%, #b4d8ee 100%);
    box-shadow: inset 0 0 0 1px #e4f2fa;
}

.running svg {
    width: 30px;
    height: 30px;
}

.tray {
    display: flex;
    align-items: center;
    height: 100%;
    margin-left: auto;
}

.slot {
    display: flex;
    align-items: center;
    justify-content: center;
    width: 22px;
    height: 34px;
}

.slot svg {
    width: 16px;
    height: 16px;
}

.slot .lang_opts {
    width: 12px;
    height: 20px;
}

.lang {
    font-family: "Liberation Mono", monospace;
}

.expand {
    width: 18px;
}

.sys {
    width: 24px;
}

.clock {
    width: 80px;
    text-align: center;
    line-height: 18px;
}

.peek {
    width: 13px;
    height: 39px;
    margin-left: 1px;
    border: 1px solid #7da4c4;
    background: linear-gradient(#6c90b4, #1c4878 50%, #2f689c);
}

.statusbar {
    display: flex;
    align-items: center;
    justify-content: space-between;
    height: 21px;
    border-top: 1px solid #8c8c8c;
    background: #f0f0f0;
    white-space: nowrap;
}

.devices {
    display: flex;
    align-items: center;
    gap: 5px;
}

.devices svg {
    width: 16px;
    height: 16px;
}

.dev_sep {
    width: 1px;
    height: 16px;
    margin: 0 3px 0 1px;
    background: #a8a8a8;
}

.devices .resize {
    width: 14px;
    height: 14px;
    margin: 0 1px 0 3px;
}
```
